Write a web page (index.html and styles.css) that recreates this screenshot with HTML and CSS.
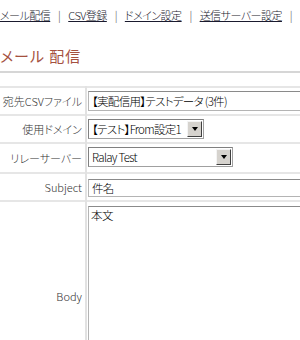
FILE: index.html
```html
<!DOCTYPE html>
<html lang="ja">
<head>
<meta charset="utf-8">
<link rel="stylesheet" href="styles.css">
</head>
<body>
<div class="nav">
  <a href="#">メール配信</a><span class="sep">|</span><a href="#">CSV登録</a><span class="sep">|</span><a href="#">ドメイン設定</a><span class="sep">|</span><a href="#">送信サーバー設定</a><span class="sep">|</span>
</div>
<h1 class="title">メール 配信</h1>
<table class="form">
  <tr>
    <th>宛先CSVファイル</th>
    <td><div class="input wide">【実配信用】テストデータ (3件)</div></td>
  </tr>
  <tr>
    <th>使用ドメイン</th>
    <td><div class="select s-domain"><span class="val">【テスト】From設定1</span><span class="btn"><i></i></span></div></td>
  </tr>
  <tr>
    <th>リレーサーバー</th>
    <td><div class="select s-relay"><span class="val">Ralay Test</span><span class="btn"><i></i></span></div></td>
  </tr>
  <tr>
    <th>Subject</th>
    <td><div class="input wide subj">件名</div></td>
  </tr>
  <tr class="tall">
    <th>Body</th>
    <td><div class="textarea">本文</div></td>
  </tr>
</table>
</body>
</html>
```
FILE: styles.css
```css
html, body {
  margin: 0;
  padding: 0;
  background: #fff;
  font-family: "Noto Sans CJK JP", "Liberation Sans", sans-serif;
  font-feature-settings: "palt";
  font-weight: 300;
  color: #222;
  overflow: hidden;
}
.nav {
  margin-top: 7px;
  height: 16px;
  line-height: 16px;
  font-size: 11px;
  letter-spacing: -0.5px;
  white-space: nowrap;
}
.nav a {
  color: #1a1a2e;
  text-decoration: underline;
}
.nav .sep {
  display: inline-block;
  width: 18px;
  text-align: center;
  color: #444;
}
.title {
  margin: 23px 0 0 0;
  font-size: 15px;
  line-height: 20px;
  font-weight: 400;
  color: #a5513f;
  letter-spacing: 1px;
  padding-bottom: 5px;
  border-bottom: 2px solid #d6d6d6;
  width: 300px;
}
.form {
  margin-top: 13px;
  border-collapse: collapse;
  width: 420px;
}
.form tr {
  border-top: 2px solid #e6e6e6;
}
.form tr:last-child {
  border-bottom: 2px solid #e6e6e6;
}
.form th {
  width: 82px;
  padding: 0 3px 0 0;
  text-align: right;
  font-weight: 300;
  font-size: 11px;
  color: #333;
  border-right: 2px solid #e2e2e2;
  white-space: nowrap;
}
.form td {
  padding: 3px 0 3px 1px;
  vertical-align: top;
}
.input {
  box-sizing: border-box;
  height: 20px;
  line-height: 18px;
  font-size: 11.5px;
  letter-spacing: -0.7px;
  color: #000;
  border: 1px solid #b4b4b4;
  border-top-color: #8a8a8a;
  padding-left: 3px;
  white-space: nowrap;
}
.input.wide { width: 320px; }
.input.subj { height: 18px; line-height: 16px; margin-top: 2px; }
.select {
  box-sizing: border-box;
  display: flex;
  align-items: stretch;
  height: 20px;
  border: 1px solid #a0a0a0;
  border-top-color: #808080;
  border-left-color: #808080;
  font-size: 11.5px;
  letter-spacing: -0.7px;
  color: #000;
  background: #fff;
}
.select .val {
  flex: 1;
  line-height: 18px;
  padding-left: 3px;
  white-space: nowrap;
  overflow: hidden;
}
.select .btn {
  box-sizing: border-box;
  width: 15px;
  margin: 1px;
  background: #d6d3ce;
  border: 1px solid;
  border-color: #f4f4f4 #404040 #404040 #f4f4f4;
  display: flex;
  align-items: center;
  justify-content: center;
}
.select .btn i {
  width: 0;
  height: 0;
  border-left: 3.5px solid transparent;
  border-right: 3.5px solid transparent;
  border-top: 4px solid #000;
}
.s-domain { width: 116px; }
.s-relay { width: 145px; }
.form tr:nth-child(3) td { padding-top: 3px; padding-bottom: 5px; }
.tall th { vertical-align: middle; }
.tall td { padding-top: 4px; }
.textarea {
  box-sizing: border-box;
  width: 320px;
  height: 180px;
  border: 1px solid #b4b4b4;
  border-top-color: #8a8a8a;
  font-size: 11.5px;
  letter-spacing: -0.5px;
  line-height: 15px;
  color: #000;
  padding: 1px 2px;
}
```
